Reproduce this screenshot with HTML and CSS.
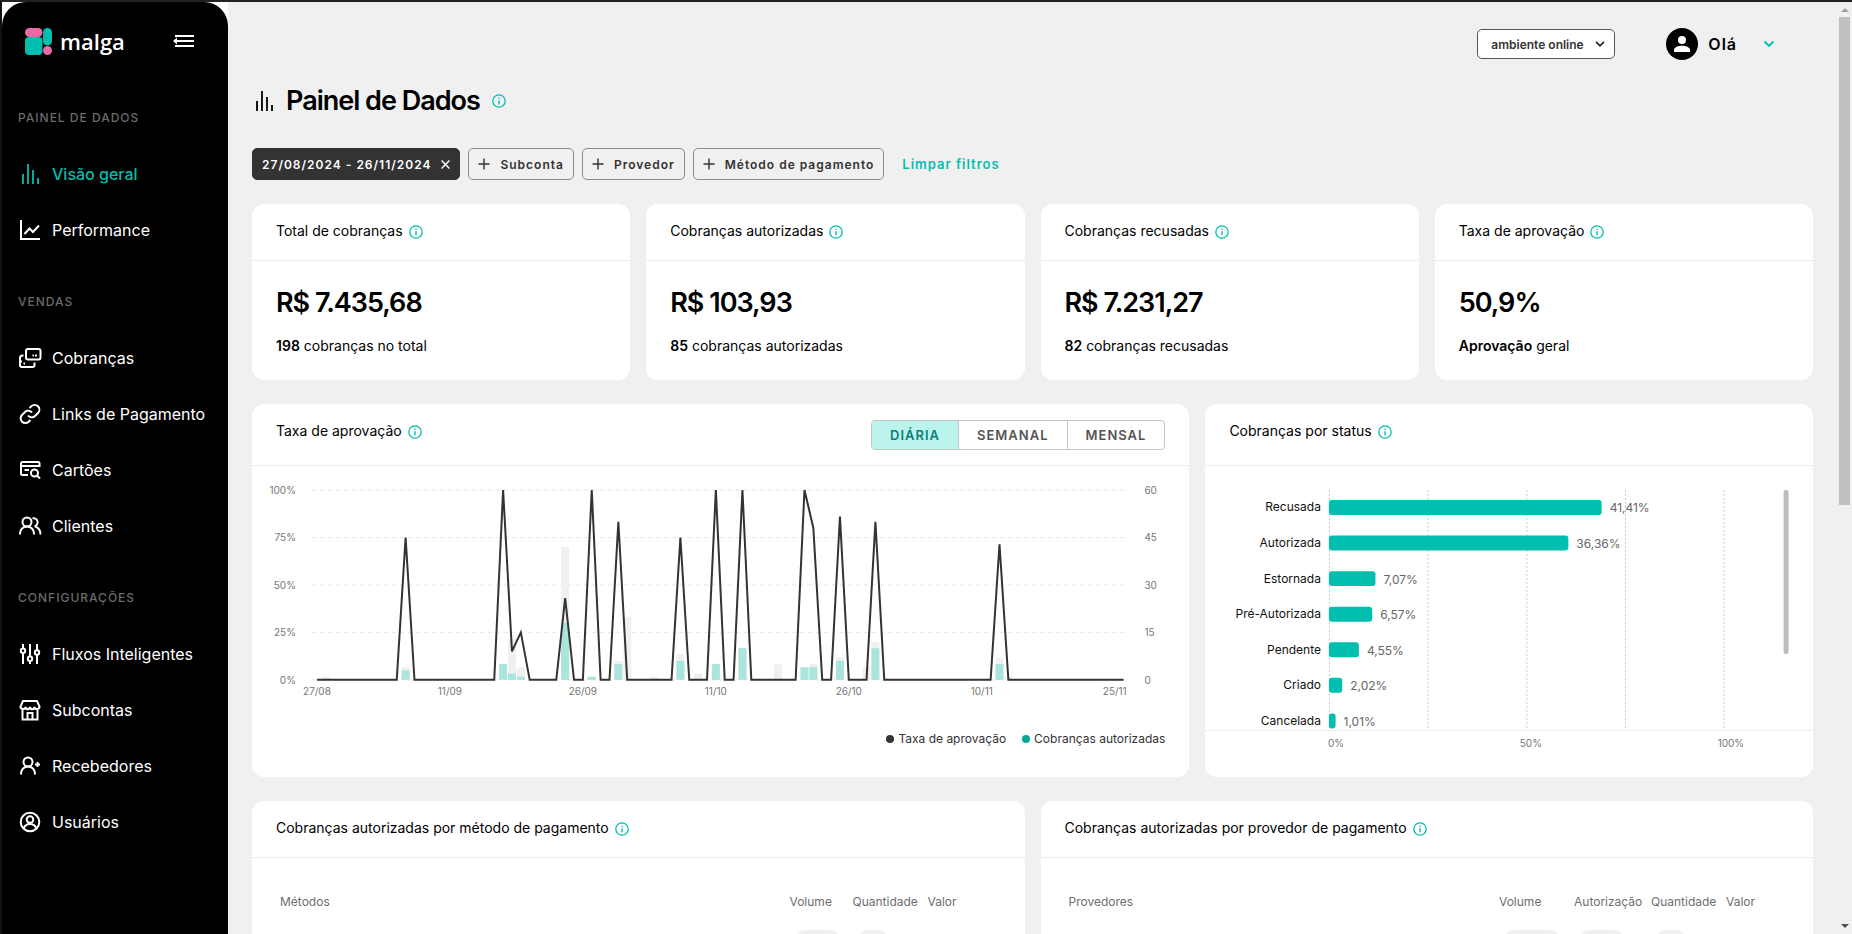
FILE: index.html
```html
<!DOCTYPE html>
<html lang="pt-BR">
<head>
  <meta charset="UTF-8" />
  <meta name="viewport" content="width=device-width, initial-scale=1.0"/>
  <title>Malga - Painel de Dados</title>
  <link rel="stylesheet" href="styles.css">
</head>
<body>
  <svg class="sprite" aria-hidden="true">
    <symbol id="i-info" viewBox="0 0 14 14">
      <circle cx="7" cy="7" r="6.2" fill="none" stroke="currentColor" stroke-width="1.3"/>
      <path d="M7 6.2v4M7 3.8v1.3" stroke="currentColor" stroke-width="1.4"/>
    </symbol>
    <symbol id="i-bars" viewBox="0 0 24 24">
      <path d="M5 12v10M10 2v20M15 8v14M20 16v6" stroke="currentColor" stroke-width="1.8"/>
    </symbol>
    <symbol id="i-plus" viewBox="0 0 12 12">
      <path d="M6 .5v11M.5 6h11" stroke="currentColor" stroke-width="1.4"/>
    </symbol>
    <symbol id="i-chevron" viewBox="0 0 16 16">
      <path d="M3.5 5.5 8 10l4.500-4.500" fill="none" stroke="currentColor" stroke-width="1.900"/>
    </symbol>
  </svg>

  <aside class="sidebar">
    <div class="brand">
      <svg class="brand-mark" viewBox="0 0 27 27" aria-hidden="true">
        <rect x="0" y="9" width="17.500" height="18" rx="4" fill="#00bfae"/>
        <rect x="0" y="0" width="17.500" height="9" rx="4.500" fill="#ec6aa5"/>
        <rect x="18" y="0" width="9" height="17.500" rx="4.500" fill="#00bfae"/>
        <circle cx="22.500" cy="22.500" r="4.500" fill="#ec6aa5"/>
      </svg>
      <span class="brand-name">malga</span>
      <button class="menu-toggle" aria-label="Recolher menu">
        <svg viewBox="0 0 22 14" aria-hidden="true">
          <path d="M2 2h19M4 7h17M2 12h19" stroke="#fff" stroke-width="2"/>
          <path d="M0 7l4-3.500v7z" fill="#fff"/>
        </svg>
      </button>
    </div>

    <nav>
      <h2 class="nav-label">PAINEL DE DADOS</h2>
      <a class="nav-item active" href="#"><svg><use href="#i-bars"/></svg>Visão geral</a>
      <a class="nav-item" href="#">
        <svg viewBox="0 0 24 24"><path d="M3 2v19h19M6.500 16l5-5.500 3.500 3.500 6-6.500"/></svg>Performance
      </a>

      <h2 class="nav-label">VENDAS</h2>
      <a class="nav-item" href="#">
        <svg viewBox="0 0 24 24"><rect x="8" y="3" width="14.500" height="10.500" rx="2"/><path d="M14.500 9.500h1.500M17 9.500h2M5.500 9.500h-1a2.500 2.500 0 0 0-2.500 2.500v7a2 2 0 0 0 2 2h10.500a2 2 0 0 0 2-2v-2.500M2 15.500h2M5.500 17.500h1.500"/></svg>Cobranças
      </a>
      <a class="nav-item" href="#">
        <svg viewBox="0 0 24 24"><path d="M10 13.500a4.600 4.600 0 0 0 7 .5l3-3a4.700 4.700 0 0 0-6.700-6.700L11.500 6M14 10.500a4.600 4.600 0 0 0-7-.5l-3 3a4.700 4.700 0 0 0 6.700 6.700l1.700-1.700"/></svg>Links de Pagamento
      </a>
      <a class="nav-item" href="#">
        <svg viewBox="0 0 24 24"><path d="M10 17H4.500A1.500 1.500 0 0 1 3 15.500v-10A1.500 1.500 0 0 1 4.500 4h15.500A1.500 1.500 0 0 1 21.500 5.500V9"/><path d="M3 8h18.500M6.500 12h4.500"/><circle cx="16.500" cy="15" r="3.500"/><path d="M19 17.500l3 3"/></svg>Cartões
      </a>
      <a class="nav-item" href="#">
        <svg viewBox="0 0 24 24"><circle cx="9" cy="8" r="4.500"/><path d="M2 20.500v-1a7 7 0 0 1 14 0v1M14.500 4.300a4 4 0 0 1 2 8M17 12.500c3.500 1 5.500 4 5.500 8"/></svg>Clientes
      </a>

      <h2 class="nav-label">CONFIGURAÇÕES</h2>
      <a class="nav-item" href="#">
        <svg viewBox="0 0 24 24"><path d="M5 2v4.500M5 11v11M12 2v12.500M12 19v3M19 2v6M19 13v9"/><circle cx="5" cy="8.800" r="2.200"/><circle cx="12" cy="16.800" r="2.200"/><circle cx="19" cy="10.500" r="2.200"/></svg>Fluxos Inteligentes
      </a>
      <a class="nav-item" href="#">
        <svg viewBox="0 0 24 24"><path d="M5 3h14l2.500 5.500c0 3-4.500 3.500-5 .5-.5 3-4 3-4.500 0-.5 3-4 3-4.500 0-.5 3-5 2.500-5-.5zM4.500 11v10.500h15V11M9.500 21.500V15h5v6.500"/></svg>Subcontas
      </a>
      <a class="nav-item" href="#">
        <svg viewBox="0 0 24 24"><circle cx="10" cy="8" r="4.500"/><path d="M3 20.500v-1a7 7 0 0 1 14 0v1M19.500 8v5M17 10.500h5"/></svg>Recebedores
      </a>
      <a class="nav-item" href="#">
        <svg viewBox="0 0 24 24"><circle cx="12" cy="12" r="9.300"/><circle cx="12" cy="9.500" r="3.300"/><path d="M5.500 18.500c1.500-3.500 4-4.500 6.500-4.500s5 1 6.500 4.500"/></svg>Usuários
      </a>
    </nav>
  </aside>

  <main>
    <header class="topbar">
      <div class="env">
        <select class="env-select" aria-label="Ambiente">
          <option>ambiente online</option>
        </select>
        <svg class="env-arrow" aria-hidden="true"><use href="#i-chevron"/></svg>
      </div>
      <button class="user">
        <svg class="avatar" viewBox="0 0 32 32" aria-hidden="true">
          <circle cx="16" cy="16" r="16" fill="#000"/>
          <circle cx="16" cy="12" r="4" fill="#fff"/>
          <path d="M8 24v-2c0-2.800 4.500-4.200 8-4.200s8 1.400 8 4.200v2z" fill="#fff"/>
        </svg>
        <span>Olá</span>
        <svg class="user-arrow" aria-hidden="true"><use href="#i-chevron"/></svg>
      </button>
    </header>

    <div class="page-title">
      <svg class="title-icon" aria-hidden="true"><use href="#i-bars"/></svg>
      <h1>Painel de Dados</h1>
      <svg class="info"><use href="#i-info"/></svg>
    </div>

    <div class="filters">
      <button class="chip chip-dark">27/08/2024 - 26/11/2024
        <svg viewBox="0 0 8 8" aria-hidden="true"><path d="M.5.5l7 7M7.500.5l-7 7" stroke="#fff" stroke-width="1.300"/></svg>
      </button>
      <button class="chip"><svg><use href="#i-plus"/></svg>Subconta</button>
      <button class="chip"><svg><use href="#i-plus"/></svg>Provedor</button>
      <button class="chip"><svg><use href="#i-plus"/></svg>Método de pagamento</button>
      <button class="clear">Limpar filtros</button>
    </div>

    <section class="grid totals">
      <article class="card">
        <div class="card-header"><h3>Total de cobranças</h3><svg class="info"><use href="#i-info"/></svg></div>
        <div class="card-body">
          <p class="value">R$ 7.435,68</p>
          <p class="detail"><strong>198</strong> cobranças no total</p>
        </div>
      </article>
      <article class="card">
        <div class="card-header"><h3>Cobranças autorizadas</h3><svg class="info"><use href="#i-info"/></svg></div>
        <div class="card-body">
          <p class="value">R$ 103,93</p>
          <p class="detail"><strong>85</strong> cobranças autorizadas</p>
        </div>
      </article>
      <article class="card">
        <div class="card-header"><h3>Cobranças recusadas</h3><svg class="info"><use href="#i-info"/></svg></div>
        <div class="card-body">
          <p class="value">R$ 7.231,27</p>
          <p class="detail"><strong>82</strong> cobranças recusadas</p>
        </div>
      </article>
      <article class="card">
        <div class="card-header"><h3>Taxa de aprovação</h3><svg class="info"><use href="#i-info"/></svg></div>
        <div class="card-body">
          <p class="value">50,9%</p>
          <p class="detail"><strong>Aprovação</strong> geral</p>
        </div>
      </article>
    </section>

    <section class="grid charts">
      <article class="card">
        <div class="card-header tall">
          <h3>Taxa de aprovação</h3><svg class="info"><use href="#i-info"/></svg>
          <div class="toggle">
            <button class="selected">DIÁRIA</button>
            <button>SEMANAL</button>
            <button>MENSAL</button>
          </div>
        </div>
        <svg id="approval" class="chart" viewBox="0 0 938 260"></svg>
        <ul class="legend">
          <li class="dark">Taxa de aprovação</li>
          <li class="teal">Cobranças autorizadas</li>
        </ul>
      </article>
      <article class="card">
        <div class="card-header tall"><h3>Cobranças por status</h3><svg class="info"><use href="#i-info"/></svg></div>
        <svg id="status" class="chart" viewBox="0 0 608 290"></svg>
      </article>
    </section>

    <section class="grid tables">
      <article class="card">
        <div class="card-header"><h3>Cobranças autorizadas por método de pagamento</h3><svg class="info"><use href="#i-info"/></svg></div>
        <table>
          <colgroup><col><col class="w63"><col class="w75"><col class="w77"></colgroup>
          <thead><tr><th>Métodos</th><th>Volume</th><th>Quantidade</th><th>Valor</th></tr></thead>
          <tbody><tr><td></td><td><span class="pill medium"></span></td><td><span class="pill small"></span></td><td></td></tr></tbody>
        </table>
      </article>
      <article class="card">
        <div class="card-header"><h3>Cobranças autorizadas por provedor de pagamento</h3><svg class="info"><use href="#i-info"/></svg></div>
        <table>
          <colgroup><col><col class="w75"><col class="w77"><col class="w75"><col class="w67"></colgroup>
          <thead><tr><th>Provedores</th><th>Volume</th><th>Autorização</th><th>Quantidade</th><th>Valor</th></tr></thead>
          <tbody><tr><td></td><td><span class="pill large"></span></td><td><span class="pill medium"></span></td><td><span class="pill small"></span></td><td></td></tr></tbody>
        </table>
      </article>
    </section>
  </main>

  <div class="scrollbar" aria-hidden="true">
    <span class="arrow-up"></span>
    <span class="thumb"></span>
    <span class="arrow-down"></span>
  </div>

  <script>
    // dia: taxa de aprovação (%)
    const taxa = { 10: 75, 21: 100, 22: 15, 23: 25, 28: 43, 31: 100, 34: 83.3, 41: 75, 45: 100, 48: 100,
      55: 100, 56: 80, 59: 86, 63: 83.3, 77: 71.4 };

    // [dia, total, autorizadas]
    const cobrancas = [[1, 1, 0], [10, 4, 3], [21, 5, 5], [22, 13, 2], [23, 4, 1], [28, 42, 18], [31, 1, 1],
      [34, 6, 5], [35, 20, 0], [38, 1, 0], [41, 8, 6], [43, 2, 0], [45, 5, 5], [48, 10, 10], [52, 5, 0],
      [55, 4, 4], [56, 5, 4], [59, 7, 6], [62, 4, 0], [63, 12, 10], [77, 7, 5], [78, 1, 0]];

    const status = [["Recusada", 41.41], ["Autorizada", 36.36], ["Estornada", 7.07], ["Pré-Autorizada", 6.57],
      ["Pendente", 4.55], ["Criado", 2.02], ["Cancelada", 1.01]];

    function desenharTaxa() {
      const passo = 8.87, inicio = 65, base = 214, altura = 190;
      const x = dia => inicio + dia * passo;
      let svg = "";

      for (let i = 0; i <= 4; i++) {
        const y = base - altura * i / 4;
        svg += `<line class="grid-line" x1="60" x2="877" y1="${y}" y2="${y}"/>`;
        svg += `<text class="tick" x="44" y="${y + 4}" text-anchor="end">${i * 25}%</text>`;
        svg += `<text class="tick" x="893" y="${y + 4}">${i * 15}</text>`;
      }

      ["27/08", "11/09", "26/09", "11/10", "26/10", "10/11", "25/11"].forEach((data, i) => {
        svg += `<text class="tick" x="${x(i * 15)}" y="229" text-anchor="middle">${data}</text>`;
      });

      cobrancas.forEach(([dia, total, ok]) => {
        const h1 = total * altura / 60, h2 = ok * altura / 60;
        svg += `<rect class="bar-total" x="${x(dia) - 4}" y="${base - h1}" width="8" height="${h1}"/>`;
        svg += `<rect class="bar-ok" x="${x(dia) - 4}" y="${base - h2}" width="8" height="${h2}"/>`;
      });

      const pontos = [];
      for (let dia = 0; dia <= 91; dia++) {
        pontos.push(x(dia) + "," + (base - (taxa[dia] || 0) * altura / 100));
      }
      svg += `<polyline class="rate" points="${pontos.join(" ")}"/>`;
      document.getElementById("approval").innerHTML = svg;
    }

    function desenharStatus() {
      let svg = "";
      for (let i = 0; i <= 4; i++) {
        const x = 124.5 + i * 98.75;
        svg += `<line class="status-line" x1="${x}" x2="${x}" y1="24" y2="262"/>`;
      }
      status.forEach(([nome, valor], i) => {
        const y = 41.5 + i * 35.6, w = valor * 6.59;
        svg += `<rect class="status-bar" x="124" y="${y - 7.5}" width="${w}" height="15" rx="3"/>`;
        svg += `<text class="status-name" x="116" y="${y + 4}" text-anchor="end">${nome}</text>`;
        svg += `<text class="status-value" x="${132 + w}" y="${y + 5}">${valor.toFixed(2).replace(".", ",")}%</text>`;
      });
      svg += `<line class="status-axis" x1="0" x2="608" y1="264.500" y2="264.500"/>`;
      svg += `<text class="tick" x="123" y="281">0%</text>`;
      svg += `<text class="tick" x="315" y="281">50%</text>`;
      svg += `<text class="tick" x="513" y="281">100%</text>`;
      svg += `<rect class="status-scroll" x="579" y="24" width="5" height="164" rx="2"/>`;
      document.getElementById("status").innerHTML = svg;
    }

    desenharTaxa();
    desenharStatus();
  </script>
</body>
</html>
```
FILE: styles.css
```css
:root {
  --teal: #00bfae;
  --page: #f0f0f0;
  --dark: #333;
  --muted: #6e6e6e;
  --line: #ececec;
}

* {
  box-sizing: border-box;
}

body {
  margin: 0;
  height: 100vh;
  overflow: hidden;
  display: flex;
  border-top: 2px solid #222;
  border-left: 2px solid #111;
  background: white;
  color: #000;
  font-family: Inter, "Liberation Sans", sans-serif;
  font-size: 14px;
}

h1, h2, h3, p, ul {
  margin: 0;
  padding: 0;
}

button {
  font-family: inherit;
  background: none;
  border: none;
  padding: 0;
  cursor: pointer;
}

.sprite {
  display: none;
}

/* Menu lateral */
.sidebar {
  width: 226px;
  flex: none;
  background: #000;
  border-radius: 24px 24px 0 0;
}

.brand {
  display: flex;
  align-items: center;
  height: 80px;
  margin-bottom: 28px;
  padding: 0 33px 2px 23px;
}

.brand-mark {
  width: 27px;
  height: 27px;
}

.brand-name {
  margin-left: 8px;
  color: #fff;
  font-family: "Open Sans", sans-serif;
  font-size: 22px;
  font-weight: 600;
}

.menu-toggle {
  margin-left: auto;
}

.menu-toggle svg {
  display: block;
  width: 22px;
  height: 14px;
}

.nav-label {
  margin: 36px 0 20px;
  padding-left: 16px;
  color: #6b6b6b;
  font-size: 12px;
  font-weight: 500;
  line-height: 16px;
  letter-spacing: 1px;
}

.nav-label:first-child {
  margin-top: 0;
}

.nav-item {
  display: flex;
  align-items: center;
  gap: 10px;
  height: 56px;
  padding-left: 16px;
  color: #fff;
  font-size: 16px;
  text-decoration: none;
}

.nav-item svg {
  width: 24px;
  height: 24px;
  fill: none;
  stroke: currentColor;
  stroke-width: 2;
}

.nav-item.active {
  color: var(--teal);
  font-weight: 500;
}

/* Conteudo */
main {
  flex: 1;
  min-width: 0;
  padding: 26px 24px 0;
  background: var(--page);
}

.topbar {
  display: flex;
  justify-content: flex-end;
  align-items: center;
  gap: 51px;
  height: 32px;
  padding-right: 36px;
}

.env {
  position: relative;
}

.env-select {
  appearance: none;
  display: block;
  width: 138px;
  height: 30px;
  padding: 0 13px;
  border: 1px solid #555;
  border-radius: 5px;
  background: #fff;
  color: #333;
  font-family: inherit;
  font-size: 12px;
  font-weight: 600;
}

.env-arrow {
  position: absolute;
  top: 8px;
  right: 8px;
  width: 14px;
  height: 14px;
  color: #222;
  pointer-events: none;
}

.user {
  display: flex;
  align-items: center;
  gap: 10px;
  color: #000;
  font-size: 16px;
  font-weight: 600;
  letter-spacing: 1px;
}

.avatar {
  width: 32px;
  height: 32px;
}

.user-arrow {
  width: 16px;
  height: 16px;
  margin-left: 14px;
  color: var(--teal);
}

.page-title {
  display: flex;
  align-items: center;
  margin-top: 24px;
}

.title-icon {
  width: 24px;
  height: 24px;
}

.page-title h1 {
  margin: 0 12px 0 10px;
  font-size: 27px;
  font-weight: 600;
  line-height: 34px;
  letter-spacing: -1px;
}

.info {
  flex: none;
  width: 14px;
  height: 14px;
  color: var(--teal);
}

.filters {
  display: flex;
  gap: 8px;
  margin: 30px 0 24px;
}

.chip {
  display: flex;
  align-items: center;
  gap: 10px;
  height: 32px;
  padding: 0 9px;
  border: 1px solid #8c8c8c;
  border-radius: 5px;
  color: var(--dark);
  font-size: 12px;
  font-weight: 600;
  letter-spacing: 1px;
}

.chip svg {
  width: 12px;
  height: 12px;
}

.chip-dark {
  background: var(--dark);
  border-color: var(--dark);
  color: #fff;
}

.chip-dark svg {
  width: 9px;
  height: 9px;
}

.clear {
  margin-left: 10px;
  color: var(--teal);
  font-size: 13px;
  font-weight: 600;
  letter-spacing: 1px;
}

.grid {
  display: grid;
  gap: 16px;
  margin-bottom: 24px;
}

.totals {
  grid-template-columns: repeat(4, 1fr);
}

.charts {
  grid-template-columns: 938fr 608fr;
}

.tables {
  grid-template-columns: 1fr 1fr;
}

.card {
  background: #fff;
  border-radius: 12px;
}

.card-header {
  display: flex;
  align-items: flex-start;
  padding: 16px 24px 15px;
  border-bottom: 1px solid var(--line);
}

.card-header.tall {
  min-height: 62px;
}

.card-header h3 {
  font-size: 14px;
  font-weight: 400;
  line-height: 22px;
  margin-bottom: 3px;
}

.card-header .info {
  margin: 5px 0 0 6px;
}

.card-body {
  padding: 24px;
}

.value {
  margin-bottom: 15px;
  font-size: 27px;
  font-weight: 600;
  line-height: 36px;
  letter-spacing: -1px;
}

.detail {
  line-height: 20px;
}

.detail strong {
  font-weight: 600;
}

.toggle {
  display: flex;
  height: 30px;
  margin-left: auto;
  border: 1px solid #c4c4c4;
  border-radius: 4px;
  overflow: hidden;
}

.toggle button {
  padding: 0 18px;
  color: #555;
  font-size: 13px;
  font-weight: 600;
  letter-spacing: 1px;
}

.toggle button + button {
  border-left: 1px solid #c4c4c4;
}

.toggle .selected {
  background: #baf4ed;
  color: #0b8175;
}

/* Graficos */
.chart {
  display: block;
  width: 100%;
  font-family: inherit;
}

.tick {
  fill: #757575;
  font-size: 10px;
}

.grid-line {
  stroke: #e6e6e6;
  stroke-dasharray: 4 4;
}

.bar-total {
  fill: #f0f0f0;
}

.bar-ok {
  fill: #a9e4dd;
}

.rate {
  fill: none;
  stroke: #333;
  stroke-width: 2;
}

.legend {
  display: flex;
  justify-content: flex-end;
  gap: 16px;
  padding: 4px 24px 29px;
  list-style: none;
  color: var(--dark);
  font-size: 12px;
  line-height: 18px;
}

.legend li {
  display: flex;
  align-items: center;
  gap: 4px;
}

.legend li::before {
  content: "";
  width: 8px;
  height: 8px;
  border-radius: 50%;
  background: var(--dark);
}

.legend .teal::before {
  background: #00a896;
}

.status-line {
  stroke: #c8c8c8;
  stroke-dasharray: 2 2;
}

.status-bar {
  fill: var(--teal);
}

.status-name {
  fill: #111;
  font-size: 12px;
}

.status-value {
  fill: #666;
  font-size: 12px;
}

.status-axis {
  stroke: var(--line);
}

.status-scroll {
  fill: #bdbdbd;
}

/* Tabelas */
table {
  width: calc(100% - 48px);
  margin: 32px 24px;
  table-layout: fixed;
  border-collapse: collapse;
}

th {
  height: 24px;
  padding: 0 4px;
  color: var(--muted);
  font-size: 12px;
  font-weight: 400;
  text-align: left;
  white-space: nowrap;
}

td {
  padding: 16px 8px;
}

.w63 { width: 63px; }
.w67 { width: 67px; }
.w75 { width: 75px; }
.w77 { width: 77px; }

.pill {
  display: block;
  height: 24px;
  border-radius: 12px;
  background: var(--page);
}

.pill.small { width: 32px; }
.pill.medium { width: 47px; }
.pill.large { width: 58px; }

/* Barra de rolagem */
.scrollbar {
  width: 15px;
  flex: none;
  display: flex;
  flex-direction: column;
  align-items: center;
  padding: 6px 0;
  background: var(--page);
}

.arrow-up, .arrow-down {
  border: 4px solid transparent;
}

.arrow-up {
  border-top: none;
  border-bottom-color: #a0a0a0;
}

.thumb {
  width: 11px;
  height: 53%;
  margin-top: 5px;
  background: #c0c0c0;
}

.arrow-down {
  margin-top: auto;
  border-bottom: none;
  border-top-color: #505050;
}
```
